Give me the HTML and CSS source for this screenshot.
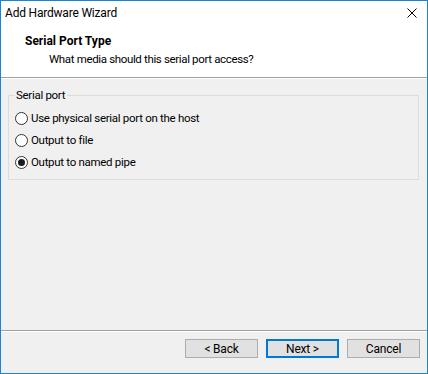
FILE: index.html
```html
<!DOCTYPE html>
<html lang="en">
<head>
    <meta charset="UTF-8">
    <title>Add Hardware Wizard</title>
    <link rel="stylesheet" href="styles.css">
</head>
<body>
    <div class="window">
        <div class="titlebar">
            <span class="title">Add Hardware Wizard</span>
            <svg class="close" width="10" height="10" viewBox="0 0 10 10">
                <path d="M0.5 0.5 L9.5 9.5 M9.5 0.5 L0.5 9.5" stroke="#000" stroke-width="1" fill="none"/>
            </svg>
        </div>
        <div class="header">
            <div class="header-title">Serial Port Type</div>
            <div class="header-sub">What media should this serial port access?</div>
        </div>
        <div class="content">
            <fieldset class="group">
                <legend>Serial port</legend>
                <label class="radio"><span class="dot"></span>Use physical serial port on the host</label>
                <label class="radio"><span class="dot"></span>Output to file</label>
                <label class="radio"><span class="dot checked"></span>Output to named pipe</label>
            </fieldset>
        </div>
        <div class="footer">
            <button class="btn">&lt; Back</button>
            <button class="btn default">Next &gt;</button>
            <button class="btn">Cancel</button>
        </div>
    </div>
</body>
</html>
```

FILE: styles.css
```css
body {
    margin: 0;
    font-family: Roboto, 'Open Sans', sans-serif;
    font-size: 11.5px;
    letter-spacing: -0.3px;
    color: #000;
}
.window {
    width: 428px;
    height: 374px;
    box-sizing: border-box;
    border: 1px solid #1883d7;
    background: #f0f0f0;
    display: flex;
    flex-direction: column;
}
.titlebar {
    height: 29px;
    background: #fff;
    display: flex;
    align-items: center;
    justify-content: space-between;
    padding: 0 10px 0 4px;
}
.title {
    font-size: 12px;
    letter-spacing: -0.2px;
    margin-top: -6px;
}
.close {
    margin-top: -5px;
}
.header {
    height: 47px;
    background: #fff;
    border-bottom: 1px solid #a0a0a0;
    box-shadow: 0 1px 0 #fff;
    padding-left: 24px;
}
.header-title {
    font-weight: bold;
    font-size: 12px;
    letter-spacing: 0;
    line-height: 16px;
    margin-top: 3px;
}
.header-sub {
    line-height: 16px;
    margin-top: 2px;
    padding-left: 24px;
    letter-spacing: -0.35px;
}
.content {
    flex: 1;
    padding: 10px 8px 0 7px;
}
.group {
    margin: 0;
    padding: 8px 0 0 6px;
    height: 82px;
    border: 1px solid #dcdcdc;
    display: flex;
    flex-direction: column;
    gap: 6px;
}
.group legend {
    padding: 0 2px 0 1px;
    margin-left: 0;
    line-height: 14px;
}
.radio {
    display: flex;
    align-items: center;
    gap: 3px;
    height: 16px;
}
.dot {
    width: 11px;
    height: 11px;
    border: 1px solid #333;
    border-radius: 50%;
    background: #fff;
    box-sizing: content-box;
    position: relative;
}
.dot.checked::after {
    content: '';
    position: absolute;
    left: 2px;
    top: 2px;
    width: 7px;
    height: 7px;
    border-radius: 50%;
    background: #1a1a1a;
}
.footer {
    height: 34px;
    border-top: 1px solid #a0a0a0;
    box-shadow: inset 0 1px 0 #fff;
    display: flex;
    justify-content: flex-end;
    align-items: flex-start;
    padding: 8px 7px 0 0;
    gap: 8px;
}
.btn {
    width: 73px;
    height: 19px;
    font-family: inherit;
    font-size: 12px;
    letter-spacing: -0.2px;
    background: #e1e1e1;
    border: 1px solid #adadad;
    padding: 0;
    box-sizing: border-box;
}
.btn.default {
    border: 2px solid #0078d7;
}
```
